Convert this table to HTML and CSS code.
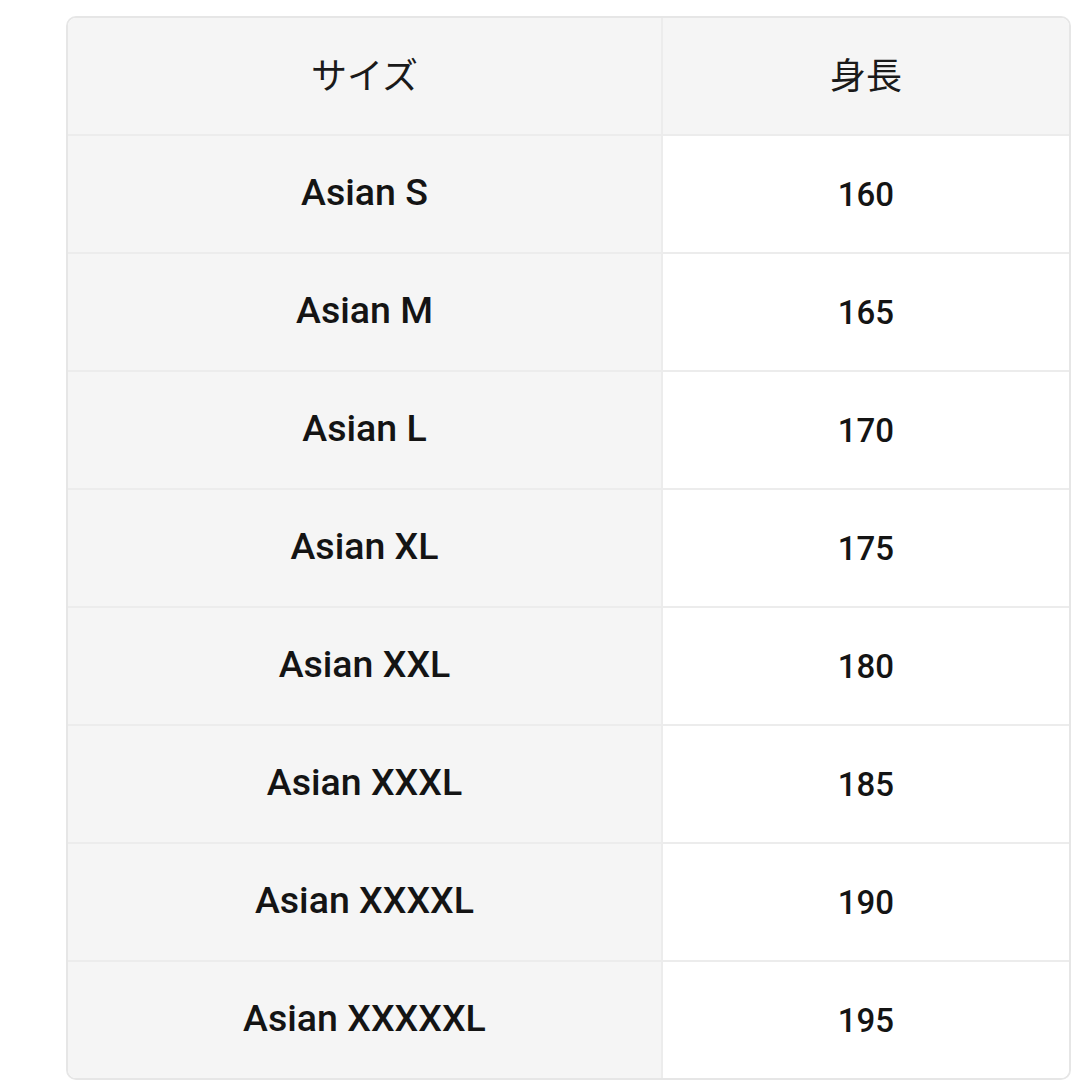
FILE: index.html
```html
<!DOCTYPE html>
<html lang="ja">
<head>
<meta charset="utf-8">
<link rel="stylesheet" href="styles.css">
</head>
<body>
<div class="wrap">
  <table class="size-table">
    <colgroup><col class="c1"><col class="c2"></colgroup>
    <thead>
      <tr><th>サイズ</th><th>身長</th></tr>
    </thead>
    <tbody>
      <tr><td>Asian S</td><td>160</td></tr>
      <tr><td>Asian M</td><td>165</td></tr>
      <tr><td>Asian L</td><td>170</td></tr>
      <tr><td>Asian XL</td><td>175</td></tr>
      <tr><td>Asian XXL</td><td>180</td></tr>
      <tr><td>Asian XXXL</td><td>185</td></tr>
      <tr><td>Asian XXXXL</td><td>190</td></tr>
      <tr><td>Asian XXXXXL</td><td>195</td></tr>
    </tbody>
  </table>
</div>
</body>
</html>
```
FILE: styles.css
```css
html, body {
  margin: 0;
  padding: 0;
  background: #ffffff;
}
.wrap {
  margin: 16px 0 0 66px;
  width: 1005px;
  box-sizing: border-box;
  border: 2px solid #e6e6e6;
  border-radius: 10px;
  overflow: hidden;
}
.size-table {
  width: 100%;
  border-collapse: collapse;
  table-layout: fixed;
}
.c1 { width: 594px; }
.size-table th,
.size-table td {
  height: 116px;
  padding: 0;
  text-align: center;
  vertical-align: middle;
  color: #141414;
  border-bottom: 2px solid #ececec;
}
.size-table th {
  background: #f5f5f5;
  font-family: "Noto Sans CJK JP", sans-serif;
  font-weight: 400;
  font-size: 36px;
  color: #1a1a1a;
  padding-bottom: 6px;
  height: 110px;
}
.size-table th:first-child,
.size-table td:first-child {
  border-right: 2px solid #ececec;
}
.size-table td {
  font-family: Roboto, "Noto Sans", sans-serif;
  font-weight: 500;
  font-size: 37.5px;
}
.size-table td:first-child {
  background: #f5f5f5;
  padding-bottom: 4px;
  height: 112px;
}
.size-table td:last-child {
  background: #ffffff;
  font-size: 33px;
}
.size-table tbody tr:last-child td {
  border-bottom: none;
}
```
